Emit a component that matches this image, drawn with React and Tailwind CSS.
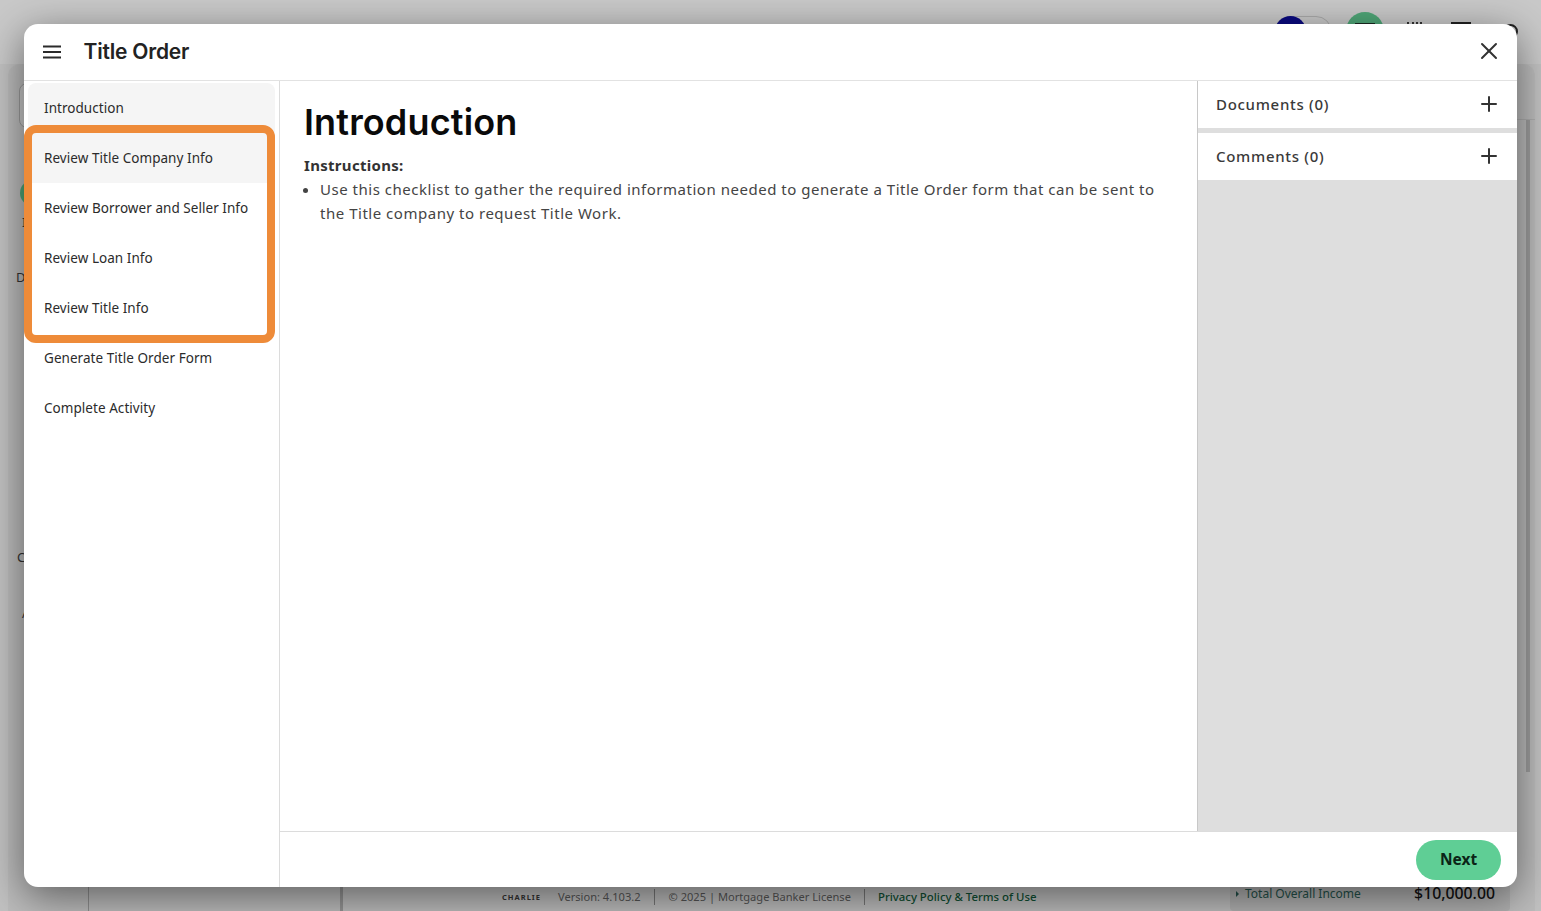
import React from "react";
import { X, Plus } from "lucide-react";

const body = "font-['Noto_Sans','Open_Sans',sans-serif]";

function NavItem({ label, active, first }) {
  return (
    <div className={`h-[50px] flex items-center px-4 text-[13.5px] text-[#2b2b2b] tracking-[0.05px] ${active ? "bg-[#f5f5f5]" : ""} ${first ? "rounded-t-lg" : ""}`}>
      {label}
    </div>
  );
}

function Section({ label }) {
  return (
    <div className="h-[47px] bg-white flex items-center justify-between pl-[18px] pr-[16px]">
      <span className="text-[15px] pb-[1px] font-medium text-[#3a3a3a] tracking-[0.7px]">{label}</span>
      <Plus size={24} strokeWidth={2} className="text-[#333] mb-[1px]" />
    </div>
  );
}

export default function App() {
  return (
    <div className={`relative h-[911px] w-[1541px] overflow-hidden bg-[#c2c2c2] flex flex-col ${body}`}>
      {/* dimmed page behind the dialog */}
      <div className="h-[64px] shrink-0 bg-[#c9c9c9] flex justify-end items-start pt-[12px] pr-[23px]">
        <div className="flex items-center w-[58px] h-[32px] mt-[4px] rounded-full border border-[#aaa]">
          <div className="w-[31px] h-[32px] rounded-full bg-[#0b0b80]" />
        </div>
        <div className="ml-[14px] w-[38px] h-[38px] rounded-full bg-[#4fa677] flex justify-center pt-[11px]">
          <div className="w-[20px] h-[20px] bg-[#1c2a22]" />
        </div>
        <div className="ml-[23px] w-[15px] h-[20px] mt-[10px] border-t-2 border-dotted border-[#333]" />
        <div className="ml-[29px] w-[20px] h-[20px] mt-[10px] bg-[#222]" />
        <div className="ml-[32px] w-[15px] h-[15px] mt-[12px] rounded-full border-2 border-[#222]" />
      </div>

      <div className="flex-1 min-h-0 flex pl-[8px] pr-[6px]">
        <div className="flex-1 min-w-0 flex bg-[#bcbcbc] rounded-t-xl">
          <div className="w-[80px] shrink-0 pl-[8px] text-[13px] leading-[20px] text-[#333]">
            <div className="ml-[3px] mt-[19px] h-[45px] w-[24px] rounded-lg border border-[#9a9a9a] bg-[#c6c6c6]" />
            <div className="ml-[4px] mt-[52px] w-[26px] h-[26px] rounded-full bg-[#4fa677]" />
            <div className="mt-[6px] ml-[6px]">I</div>
            <div className="mt-[35px]">D</div>
            <div className="mt-[260px] ml-[1px]">C</div>
            <div className="mt-[36px] ml-[6px]">A</div>
          </div>
          <div className="w-[252px] shrink-0 border-l border-[#8f8f8f]" />
          <div className="w-[890px] shrink-0 border-l-[3px] border-[#949494] flex flex-col justify-end">
            <div className="h-[24px] flex items-center pb-[4px] pl-[156px] text-[11.1px] text-[#555] whitespace-nowrap">
              <span className="w-[45px] text-[7.5px] leading-[8px] font-bold text-center text-[#333] tracking-[1px]">CHARLIE</span>
              <span className="ml-[14px]">Version: 4.103.2</span>
              <span className="ml-[13px] h-[16px] border-l border-[#777]" />
              <span className="ml-[14px]">© 2025 | Mortgage Banker License</span>
              <span className="ml-[13px] h-[16px] border-l border-[#777]" />
              <span className="ml-[13px] text-[11.4px] text-[#0f4f33] font-medium">Privacy Policy &amp; Terms of Use</span>
            </div>
          </div>
          <div className="w-[280px] shrink-0 flex flex-col justify-end">
            <div className="h-[34px] rounded-b-sm bg-[#b0b0b0] flex items-center justify-between pl-[6px] pr-[15px] whitespace-nowrap">
              <span className="flex items-center text-[12px] text-[#24504a]">
                <span className="mr-[6px] w-0 h-0 border-y-[3px] border-y-transparent border-l-[3px] border-l-[#24504a]" />
                Total Overall Income
              </span>
              <span className="text-[15.8px] font-medium text-[#111]">$10,000.00</span>
            </div>
          </div>
          <div className="flex-1 flex flex-col">
            <div className="h-[56px] border-b border-[#adadad]" />
            <div className="ml-[16px] w-[4px] h-[652px] bg-[#9c9c9c]" />
          </div>
        </div>
      </div>

      {/* dialog */}
      <div className="absolute left-[24px] top-[24px] w-[1493px] h-[863px] bg-white rounded-[14px] overflow-hidden flex flex-col shadow-[0_10px_40px_rgba(0,0,0,0.5)]">
        <header className="h-[57px] shrink-0 flex items-center justify-between border-b border-[#e2e2e2] pl-[19px] pr-[14px]">
          <div className="flex items-center gap-[23px]">
            <svg width="18" height="14" viewBox="0 0 18 14" className="text-[#2b2b2b]">
              <path d="M0 1.5h18M0 7h18M0 12.5h18" stroke="currentColor" strokeWidth="2" fill="none" />
            </svg>
            <span className="font-['Inter',sans-serif] -ml-[0.5px] text-[21px] font-semibold text-[#222] tracking-[-0.2px]">Title Order</span>
          </div>
          <X size={28} strokeWidth={1.7} className="text-[#333] mb-[2px]" />
        </header>

        <div className="flex-1 flex min-h-0">
          <aside className="w-[256px] shrink-0 border-r border-[#dcdcdc] pt-[2px] px-[4px]">
            <NavItem label="Introduction" active first />
            <NavItem label="Review Title Company Info" active />
            <NavItem label="Review Borrower and Seller Info" />
            <NavItem label="Review Loan Info" />
            <NavItem label="Review Title Info" />
            <NavItem label="Generate Title Order Form" />
            <NavItem label="Complete Activity" />
          </aside>

          <div className="flex-1 flex flex-col min-w-0">
            <div className="flex-1 flex min-h-0">
              <main className="flex-1 min-w-0 pl-[24px] pr-[40px] pt-[17px]">
                <h1 className="font-['Inter',sans-serif] text-[36px] leading-[48px] font-semibold text-[#0a0a0a] tracking-[0.15px]">Introduction</h1>
                <p className="mt-[7px] text-[15px] leading-[24px] font-bold text-[#333] tracking-[0.3px]">Instructions:</p>
                <ul className="list-disc pl-[16px] text-[15px] leading-[24px] text-[#444] tracking-[0.52px]">
                  <li>Use this checklist to gather the required information needed to generate a Title Order form that can be sent to the Title company to request Title Work.</li>
                </ul>
              </main>
              <div className="w-[320px] shrink-0 border-l border-[#c8c8c8] bg-[#dedede] flex flex-col gap-[5px]">
                <Section label="Documents (0)" />
                <Section label="Comments (0)" />
              </div>
            </div>
            <footer className="h-[56px] shrink-0 border-t border-[#dcdcdc] flex items-center justify-end pr-[16px]">
              <button className="w-[85px] h-[40px] pt-[1px] rounded-full bg-[#5fce95] text-[15.5px] font-bold text-[#0b2417]">Next</button>
            </footer>
          </div>
        </div>
      </div>

      {/* annotation */}
      <div className="absolute left-[24px] top-[125px] w-[251px] h-[218px] border-[8px] border-[#ee8b39] rounded-[12px]" />
    </div>
  );
}
